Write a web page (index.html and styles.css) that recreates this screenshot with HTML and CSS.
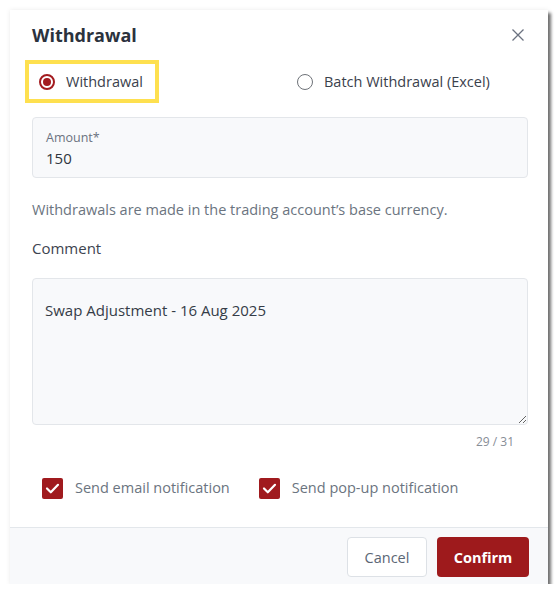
FILE: index.html
```html
<!DOCTYPE html>
<html lang="en">
<head>
<meta charset="utf-8">
<title>Withdrawal</title>
<link rel="stylesheet" href="styles.css">
</head>
<body>
<div class="dialog">
  <div class="header">
    <h1 class="title">Withdrawal</h1>
    <button class="close" aria-label="Close">
      <svg width="12" height="12" viewBox="0 0 12 12"><path d="M0.5 0.5 L11.5 11.5 M11.5 0.5 L0.5 11.5" stroke="#6b7280" stroke-width="1.3" fill="none"/></svg>
    </button>
  </div>
  <div class="body">
    <div class="radio-row">
      <label class="radio radio-first highlighted"><span class="dot checked"></span><span>Withdrawal</span></label>
      <label class="radio radio-second"><span class="dot"></span><span>Batch Withdrawal (Excel)</span></label>
    </div>
    <div class="field">
      <div class="field-label">Amount*</div>
      <div class="field-value">150</div>
    </div>
    <p class="helper">Withdrawals are made in the trading account’s base currency.</p>
    <div class="section-label">Comment</div>
    <textarea class="comment">Swap Adjustment - 16 Aug 2025</textarea>
    <div class="counter">29 / 31</div>
    <div class="checks">
      <label class="check"><span class="box"><svg width="21" height="21" viewBox="0 0 21 21"><path d="M5 10.5 L8.8 14.3 L16 6.8" stroke="#fff" stroke-width="2.2" fill="none" stroke-linecap="round" stroke-linejoin="round"/></svg></span><span>Send email notification</span></label>
      <label class="check"><span class="box"><svg width="21" height="21" viewBox="0 0 21 21"><path d="M5 10.5 L8.8 14.3 L16 6.8" stroke="#fff" stroke-width="2.2" fill="none" stroke-linecap="round" stroke-linejoin="round"/></svg></span><span>Send pop-up notification</span></label>
    </div>
  </div>
  <div class="footer">
    <button class="btn btn-cancel">Cancel</button>
    <button class="btn btn-confirm">Confirm</button>
  </div>
</div>
</body>
</html>
```

FILE: styles.css
```css
* { box-sizing: border-box; }
body {
  margin: 0;
  background: #ffffff;
  font-family: "Open Sans", "Noto Sans", sans-serif;
  color: #374151;
}
.dialog {
  margin: 10px 0 0 10px;
  width: 538px;
  background: #ffffff;
  box-shadow: 3px 3px 3px rgba(0, 0, 0, 0.55), 0 0 5px rgba(0, 0, 0, 0.08);
}
.header {
  display: flex;
  justify-content: space-between;
  align-items: center;
  padding: 11px 24px 0 22px;
}
.title {
  margin: 0;
  font-size: 18px;
  line-height: 28px;
  font-weight: 700;
  color: #2b323d;
}
.close {
  border: 0;
  background: none;
  padding: 0;
  width: 12px;
  height: 12px;
  display: flex;
}
.body {
  padding: 0 20px 0 22px;
}
.radio-row {
  display: grid;
  grid-template-columns: 258px 1fr;
  margin: 15px 0 0 -3px;
  align-items: center;
}
.radio {
  display: inline-flex;
  align-items: center;
  gap: 11px;
  height: 35px;
  padding: 0 12px 0 10px;
  font-size: 14.5px;
  color: #3a414c;
  justify-self: start;
}
.highlighted {
  outline: 4px solid #fee04f;
}
.dot {
  width: 16px;
  height: 16px;
  border-radius: 50%;
  border: 1.5px solid #6e7278;
  flex: none;
  position: relative;
}
.dot.checked {
  border: 2px solid #a31b1f;
}
.dot.checked::after {
  content: "";
  position: absolute;
  left: 2px;
  top: 2px;
  width: 8px;
  height: 8px;
  border-radius: 50%;
  background: #a31b1f;
}
.field {
  margin-top: 18px;
  height: 61px;
  border: 1px solid #e3e6ea;
  border-radius: 4px;
  background: #f8f9fb;
  padding: 11px 13px 0;
}
.field-label {
  font-size: 12.5px;
  line-height: 18px;
  color: #6b7280;
}
.field-value {
  font-size: 15px;
  line-height: 22px;
  color: #2f3640;
}
.helper {
  margin: 22px 0 0;
  font-size: 14.5px;
  line-height: 20px;
  color: #6b7480;
}
.section-label {
  margin-top: 17px;
  font-size: 15px;
  line-height: 22px;
  color: #3d444f;
}
.comment {
  display: block;
  margin-top: 19px;
  width: 100%;
  height: 147px;
  border: 1px solid #e3e6ea;
  border-radius: 4px;
  background: #f8f9fb;
  padding: 20px 12px;
  font-family: "Open Sans", "Noto Sans", sans-serif;
  font-size: 15px;
  line-height: 22px;
  color: #353c47;
  resize: vertical;
}
.counter {
  margin-top: 8px;
  text-align: right;
  padding-right: 14px;
  font-size: 12px;
  line-height: 18px;
  color: #878d96;
}
.checks {
  display: flex;
  gap: 29px;
  margin-top: 26px;
  padding-left: 10px;
}
.check {
  display: inline-flex;
  align-items: center;
  gap: 12px;
  font-size: 14.5px;
  line-height: 22px;
  color: #6b7480;
}
.box {
  width: 21px;
  height: 21px;
  border-radius: 2px;
  background: #a01a1e;
  display: flex;
}
.footer {
  margin-top: 28px;
  border-top: 1px solid #e3e7eb;
  background: #f8f9fb;
  padding: 9px 19px 7px;
  display: flex;
  justify-content: flex-end;
  gap: 10px;
}
.btn {
  height: 40px;
  border-radius: 4px;
  font-family: "Open Sans", "Noto Sans", sans-serif;
  font-size: 14.5px;
  padding: 0;
}
.btn-cancel {
  width: 80px;
  background: #ffffff;
  border: 1px solid #dde1e6;
  color: #5b6675;
  font-weight: 500;
}
.btn-confirm {
  width: 92px;
  background: #9e1a1c;
  border: 0;
  color: #ffffff;
  font-weight: 700;
}
```
